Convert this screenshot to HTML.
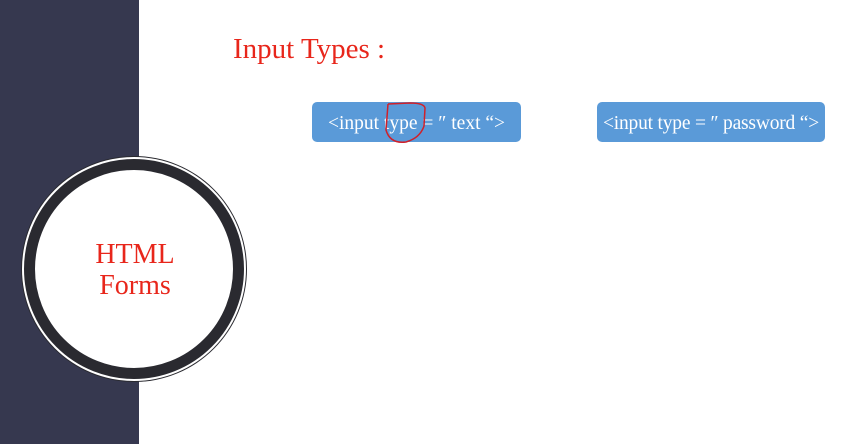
<!DOCTYPE html>
<html><head><style>
body{margin:0;width:865px;height:444px;background:#fff;position:relative;overflow:hidden;font-family:"Liberation Serif",serif}
.side{position:absolute;left:0;top:0;width:139px;height:444px;background:#36384f}
.ring{position:absolute;left:24px;top:159px;width:198px;height:198px;border-radius:50%;border:11px solid #2a2a30;background:#fff;box-shadow:0 0 0 2px #fff,0 0 0 3px #2a2a30}
.t{position:absolute;color:#e8261b}
.box{position:absolute;top:102px;height:40px;background:#5a9ad8;border-radius:5px;color:#fff;font-size:19.5px;line-height:43px;text-align:center;white-space:nowrap}
</style></head><body>
<div class="side"></div>
<div class="ring"></div>
<div class="t" style="left:55px;top:239px;width:160px;text-align:center;font-size:28px;line-height:31px">HTML<br>Forms</div>
<div class="t" style="left:233px;top:33px;font-size:29px">Input Types :</div>
<div class="box" style="left:312px;width:209px">&lt;input type = ″ text “&gt;</div>
<div class="box" style="left:597px;width:228px;letter-spacing:-0.2px">&lt;input type = ″ password “&gt;</div>
<svg style="position:absolute;left:380px;top:100px" width="50" height="46"><path d="M8 4 L6 30 Q10 44 26 42 Q40 38 44 26 L45 8 Q44 3 30 3 L8 4" fill="none" stroke="#d0202a" stroke-width="1.5"/></svg>
</body></html>
